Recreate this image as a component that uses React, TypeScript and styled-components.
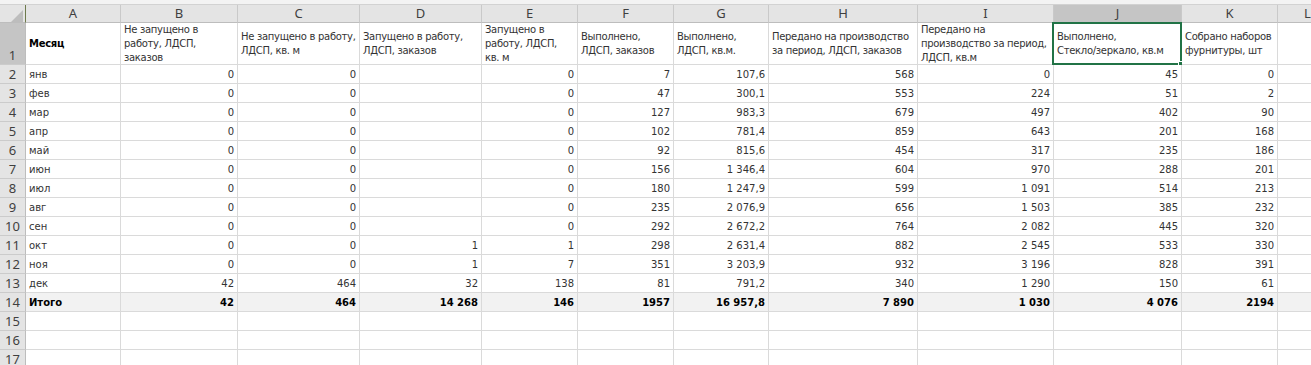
import React from "react";
import styled, { createGlobalStyle, css } from "styled-components";

const Global = createGlobalStyle`
  html, body { margin: 0; padding: 0; background: #ffffff; overflow: hidden; }
  * { box-sizing: border-box; }
`;

const COLS = [26, 95, 117, 122, 122, 96, 96, 95, 149, 136, 128, 96, 60];
const LETTERS = ["A", "B", "C", "D", "E", "F", "G", "H", "I", "J", "K", "L"];
const SELECTED_COL = 9;

const Page = styled.div`
  width: 1311px;
  height: 365px;
  overflow: hidden;
  background: #ffffff;
`;

const TopStrip = styled.div`
  height: 5px;
  background: #f3f3f3;
  border-bottom: 1px solid #d2d2d2;
`;

const Sheet = styled.div`
  display: grid;
  grid-template-columns: ${COLS.map((c) => c + "px").join(" ")};
  grid-template-rows: 18px 42px repeat(16, 19px);
  font-family: "DejaVu Sans", "Noto Sans", sans-serif;
`;

const Corner = styled.div`
  position: relative;
  background: #e4e4e4;
  border-right: 1px solid #6d7a4c;
  border-bottom: 1px solid #bdbdbd;
`;

const CornerTriangle = styled.svg`
  position: absolute;
  left: 11px;
  top: 5px;
`;

const ColHead = styled.div<{ $sel?: boolean }>`
  background: ${(p) => (p.$sel ? "#c5c5c5" : "#e4e4e4")};
  border-right: 1px solid #c9c9c9;
  border-bottom: 1px solid ${(p) => (p.$sel ? "#217346" : "#bdbdbd")};
  font-family: "Noto Sans", "DejaVu Sans", sans-serif;
  font-size: 13px;
  color: #3f3f3f;
  display: flex;
  align-items: center;
  justify-content: center;
  line-height: 1;
  overflow: hidden;
  white-space: nowrap;
`;

const RowHead = styled.div<{ $sel?: boolean }>`
  background: ${(p) => (p.$sel ? "#c5c5c5" : "#e4e4e4")};
  border-right: 1px solid #bdbdbd;
  border-bottom: 1px solid #cbcbcb;
  font-family: "Noto Sans", "DejaVu Sans", sans-serif;
  font-size: 13px;
  color: #3f3f3f;
  display: flex;
  align-items: flex-end;
  justify-content: center;
  line-height: 17px;
  overflow: hidden;
`;

const Cell = styled.div<{ $num?: boolean; $bold?: boolean; $total?: boolean; $head?: boolean }>`
  position: relative;
  border-right: 1px solid #dadada;
  border-bottom: 1px solid #dadada;
  background: ${(p) => (p.$total ? "#f2f2f2" : "#ffffff")};
  font-size: 10px;
  color: ${(p) => (p.$bold ? "#000000" : "#333333")};
  font-weight: ${(p) => (p.$bold ? 700 : 400)};
  padding: 0 3px;
  display: flex;
  align-items: center;
  justify-content: ${(p) => (p.$num ? "flex-end" : "flex-start")};
  white-space: pre;
  ${(p) =>
    p.$head &&
    css`
      line-height: 14.3px;
      padding-top: 1px;
      letter-spacing: -0.3px;
    `}
`;

const Selection = styled.div`
  position: absolute;
  left: -2px;
  top: -1px;
  right: -1px;
  bottom: -1px;
  border: 2px solid #217346;
  pointer-events: none;
`;

const Handle = styled.div`
  position: absolute;
  right: -4px;
  bottom: -4px;
  width: 6px;
  height: 6px;
  background: #217346;
  border: 1px solid #ffffff;
`;

const HEADERS: { text: string; bold?: boolean }[] = [
  { text: "Месяц", bold: true },
  { text: "Не запущено в\nработу, ЛДСП,\nзаказов" },
  { text: "Не запущено в работу,\nЛДСП, кв. м" },
  { text: "Запущено в работу,\nЛДСП, заказов" },
  { text: "Запущено в\nработу, ЛДСП,\nкв. м" },
  { text: "Выполнено,\nЛДСП, заказов" },
  { text: "Выполнено,\nЛДСП, кв.м." },
  { text: "Передано на производство\nза период, ЛДСП, заказов" },
  { text: "Передано на\nпроизводство за период,\nЛДСП, кв.м" },
  { text: "Выполнено,\nСтекло/зеркало, кв.м" },
  { text: "Собрано наборов\nфурнитуры, шт" },
  { text: "" },
];

const DATA: string[][] = [
  ["янв", "0", "0", "", "0", "7", "107,6", "568", "0", "45", "0"],
  ["фев", "0", "0", "", "0", "47", "300,1", "553", "224", "51", "2"],
  ["мар", "0", "0", "", "0", "127", "983,3", "679", "497", "402", "90"],
  ["апр", "0", "0", "", "0", "102", "781,4", "859", "643", "201", "168"],
  ["май", "0", "0", "", "0", "92", "815,6", "454", "317", "235", "186"],
  ["июн", "0", "0", "", "0", "156", "1 346,4", "604", "970", "288", "201"],
  ["июл", "0", "0", "", "0", "180", "1 247,9", "599", "1 091", "514", "213"],
  ["авг", "0", "0", "", "0", "235", "2 076,9", "656", "1 503", "385", "232"],
  ["сен", "0", "0", "", "0", "292", "2 672,2", "764", "2 082", "445", "320"],
  ["окт", "0", "0", "1", "1", "298", "2 631,4", "882", "2 545", "533", "330"],
  ["ноя", "0", "0", "1", "7", "351", "3 203,9", "932", "3 196", "828", "391"],
  ["дек", "42", "464", "32", "138", "81", "791,2", "340", "1 290", "150", "61"],
];

const TOTAL = ["Итого", "42", "464", "14 268", "146", "1957", "16 957,8", "7 890", "1 030", "4 076", "2194"];

export default function App() {
  return (
    <Page>
      <Global />
      <TopStrip />
      <Sheet>
        <Corner>
          <CornerTriangle width="12" height="12" viewBox="0 0 12 12">
            <polygon points="12,0 12,12 0,12" fill="#bdbdbd" />
          </CornerTriangle>
        </Corner>
        {LETTERS.map((l, i) => (
          <ColHead key={l} $sel={i === SELECTED_COL}>
            {l}
          </ColHead>
        ))}

        <RowHead $sel>1</RowHead>
        {HEADERS.map((h, i) => (
          <Cell key={"h" + i} $head $bold={h.bold}>
            {h.text}
            {i === SELECTED_COL && (
              <Selection>
                <Handle />
              </Selection>
            )}
          </Cell>
        ))}

        {DATA.map((row, r) => (
          <React.Fragment key={"r" + r}>
            <RowHead>{r + 2}</RowHead>
            {row.map((v, c) => (
              <Cell key={c} $num={c > 0}>
                {v}
              </Cell>
            ))}
            <Cell />
          </React.Fragment>
        ))}

        <RowHead>14</RowHead>
        {TOTAL.map((v, c) => (
          <Cell key={"t" + c} $num={c > 0} $bold $total>
            {v}
          </Cell>
        ))}
        <Cell $total />

        {[15, 16, 17, 18].map((n) => (
          <React.Fragment key={"e" + n}>
            <RowHead>{n}</RowHead>
            {LETTERS.map((l) => (
              <Cell key={l} />
            ))}
          </React.Fragment>
        ))}
      </Sheet>
    </Page>
  );
}
